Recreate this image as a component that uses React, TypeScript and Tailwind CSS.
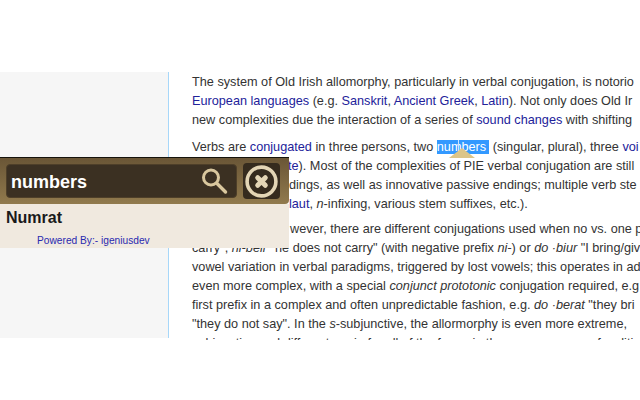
function A({ children }: { children: React.ReactNode }) {
  return <span className="text-[#22229a]">{children}</span>;
}

function Line({ children, className = "" }: { children: React.ReactNode; className?: string }) {
  return <div className={"h-[19px] leading-[19px] whitespace-nowrap " + className}>{children}</div>;
}

function SearchIcon() {
  return (
    <svg width="30" height="30" viewBox="0 0 30 30" fill="none" stroke="#d9c79e" strokeLinecap="round">
      <circle cx="12" cy="11.5" r="7.5" strokeWidth="3" />
      <path d="M18 17.5 L26.5 26" strokeWidth="3.4" />
    </svg>
  );
}

function CloseIcon() {
  return (
    <svg width="33" height="33" viewBox="0 0 33 33" fill="none">
      <circle cx="16.5" cy="16.5" r="14.4" stroke="#e3d5b5" strokeWidth="3.6" />
      <path d="M12.7 12.7 L20.3 20.3 M20.3 12.7 L12.7 20.3" stroke="#e3d5b5" strokeWidth="5" strokeLinecap="round" />
    </svg>
  );
}

export default function App() {
  return (
    <div className="relative w-[640px] h-[400px] overflow-hidden bg-white font-['Liberation_Sans',Arial,sans-serif] text-[12.7px] text-[#333333]">
      <div className="h-[72px]" />
      <div className="flex h-[268px] overflow-hidden">
        <div className="w-[168px] h-[266px] shrink-0 bg-[#f6f6f6] border-r border-[#a7d7f9] box-content" />
        <div className="flex-1 min-w-0 overflow-hidden pl-[23px] pt-[1px]">
          <Line>The system of Old Irish allomorphy, particularly in verbal conjugation, is notorio</Line>
          <Line>
            <A>European languages</A> (e.g. <A>Sanskrit</A>, <A>Ancient Greek</A>, <A>Latin</A>). Not only does Old Ir
          </Line>
          <Line>
            new complexities due the interaction of a series of <A>sound changes</A> with shifting
          </Line>
          <Line className="mt-[8px]">
            Verbs are <A>conjugated</A> in three persons, two{" "}
            <span className="relative bg-[#3399ff] text-white pr-[3px]">
              numbers
              <span className="absolute left-[21px] top-0 h-full w-px bg-[#cfe6ff]" />
            </span>{" "}
            (singular, plural), three <A>voi</A>
          </Line>
          <Line className="pl-[96px]">
            <A>te</A>). Most of the complexities of PIE verbal conjugation are still
          </Line>
          <Line className="pl-[97px]">dings, as well as innovative passive endings; multiple verb ste</Line>
          <Line className="pl-[97px]">
            <A>laut</A>, <i>n</i>-infixing, various stem suffixes, etc.).
          </Line>
          <Line className="mt-[6px] pl-[98px]">wever, there are different conjugations used when no vs. one p</Line>
          <Line>
            carry", <i>ni-beir</i> "he does not carry" (with negative prefix <i>ni-</i>) or <i>do ·biur</i> "I bring/giv
          </Line>
          <Line>vowel variation in verbal paradigms, triggered by lost vowels; this operates in ad</Line>
          <Line>
            even more complex, with a special <i>conjunct prototonic</i> conjugation required, e.g
          </Line>
          <Line>
            first prefix in a complex and often unpredictable fashion, e.g. <i>do ·berat</i> "they bri
          </Line>
          <Line>
            "they do not say". In the <i>s</i>-subjunctive, the allormorphy is even more extreme,
          </Line>
          <Line>subjunctive and different again for all of the forms in the many persons of a clitic</Line>
        </div>
      </div>

      {/* caret pointing at the selected word */}
      <div className="absolute left-[449px] top-[148px] w-0 h-0 border-x-[13px] border-x-transparent border-b-[10px] border-b-[#dcc588]" />

      {/* dictionary popup */}
      <div className="absolute left-0 top-[157px] w-[289px]">
        <div className="h-[47px] flex items-center gap-[6px] pl-[6px] pr-[9px] border-t border-[#15130c] rounded-br-[4px] bg-gradient-to-b from-[#6a5636] to-[#917a4d]">
          <div className="w-[231px] h-[34px] flex items-center justify-between pl-[4px] pr-[7px] rounded-[4px] bg-[#3b3022] border border-[#4e3f29]">
            <span className="pt-[3px] text-[18px] font-bold text-white">numbers</span>
            <SearchIcon />
          </div>
          <div className="w-[37px] h-[36px] flex items-center justify-center rounded-[4px] bg-[#352b1e]">
            <CloseIcon />
          </div>
        </div>
        <div className="h-[44px] bg-[#f0e9df] pl-[6px] pt-[4px]">
          <div className="text-[16px] leading-[20px] font-bold text-[#1a1a1a]">Numrat</div>
          <div className="pl-[31px] mt-[7px] text-[10.2px] leading-[12px] text-[#2a2ab0]">Powered By:- igeniusdev</div>
        </div>
      </div>
    </div>
  );
}
